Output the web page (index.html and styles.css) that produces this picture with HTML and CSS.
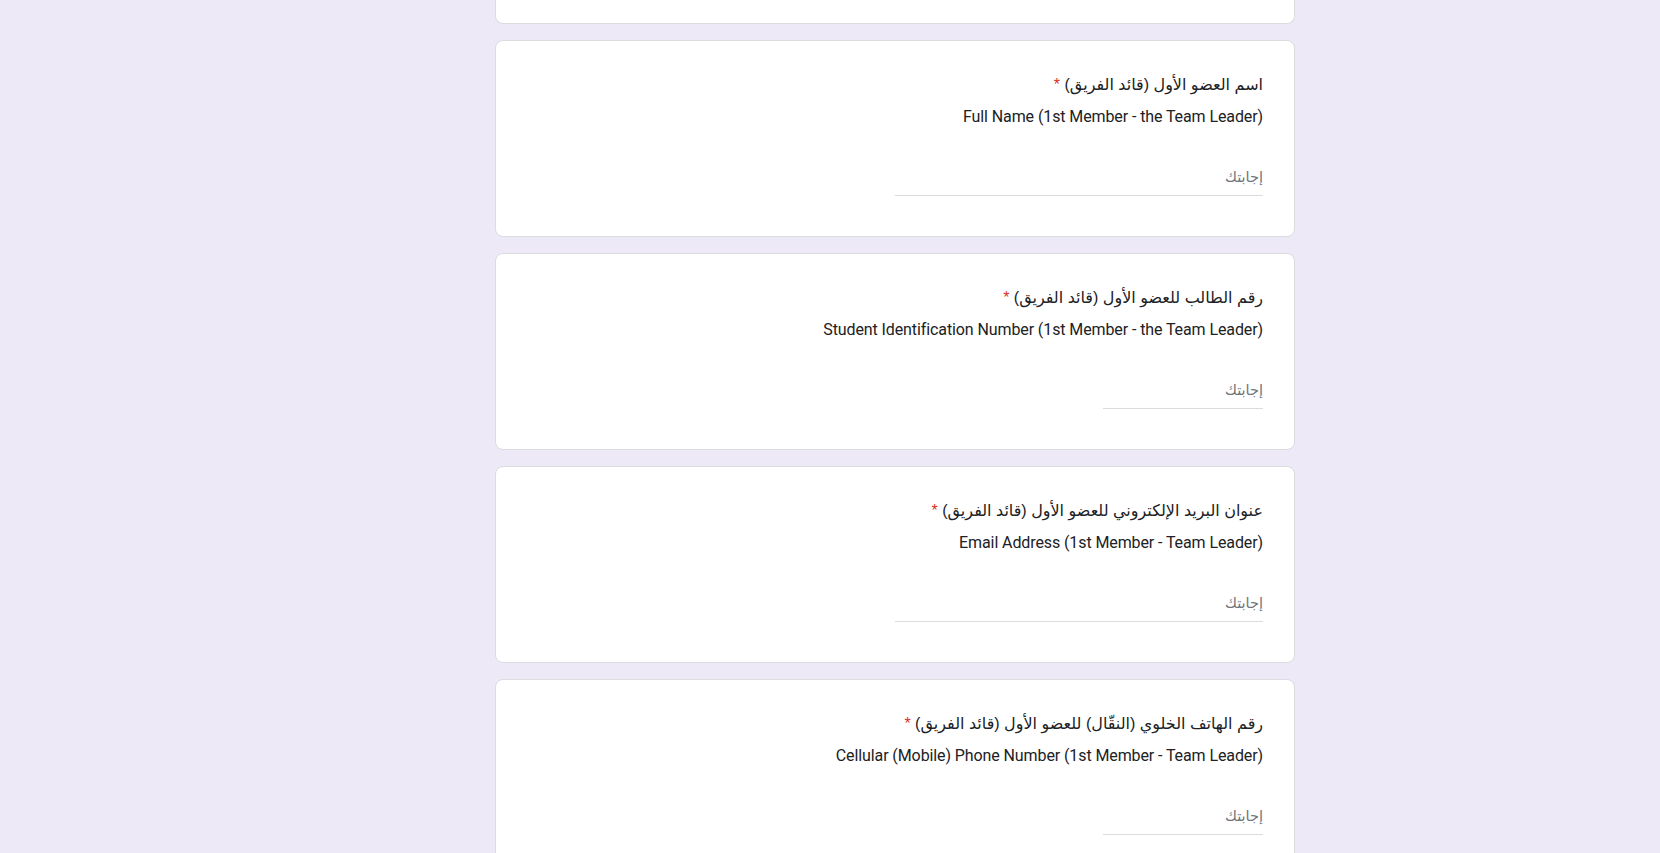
FILE: index.html
```html
<!DOCTYPE html>
<html lang="ar" dir="rtl">
<head>
<meta charset="utf-8">
<title>Form</title>
<link rel="stylesheet" href="styles.css">
</head>
<body>
<main class="form">
  <div class="card card-cut"></div>

  <section class="card">
    <div class="q-title">اسم العضو الأول (قائد الفريق) <span class="req">*</span></div>
    <div class="q-desc">Full Name (1st Member - the Team Leader)</div>
    <div class="answer answer-wide"><span class="ph">إجابتك</span></div>
  </section>

  <section class="card">
    <div class="q-title">رقم الطالب للعضو الأول (قائد الفريق) <span class="req">*</span></div>
    <div class="q-desc">Student Identification Number (1st Member - the Team Leader)</div>
    <div class="answer answer-narrow"><span class="ph">إجابتك</span></div>
  </section>

  <section class="card">
    <div class="q-title">عنوان البريد الإلكتروني للعضو الأول (قائد الفريق) <span class="req">*</span></div>
    <div class="q-desc">Email Address (1st Member - Team Leader)</div>
    <div class="answer answer-wide"><span class="ph">إجابتك</span></div>
  </section>

  <section class="card">
    <div class="q-title">رقم الهاتف الخلوي (النقّال) للعضو الأول (قائد الفريق) <span class="req">*</span></div>
    <div class="q-desc">Cellular (Mobile) Phone Number (1st Member - Team Leader)</div>
    <div class="answer answer-narrow"><span class="ph">إجابتك</span></div>
  </section>
</main>
</body>
</html>
```

FILE: styles.css
```css
html, body {
  margin: 0;
  padding: 0;
}
body {
  background: #ede9f7;
  font-family: Roboto, "Liberation Sans", "DejaVu Sans", sans-serif;
  color: #202124;
  overflow: hidden;
  height: 853px;
}
.form {
  direction: rtl;
  width: 800px;
  margin-right: 365px;
  margin-left: 0;
  display: flex;
  flex-direction: column;
  gap: 16px;
}
.card {
  box-sizing: border-box;
  background: #fff;
  border: 1px solid #dadce0;
  border-radius: 8px;
  padding: 32px 31px 0 31px;
  height: 197px;
  display: flex;
  flex-direction: column;
  align-items: flex-start;
}
.card-cut {
  height: 24px;
  border-top: none;
  border-top-left-radius: 0;
  border-top-right-radius: 0;
  padding: 0;
}
.q-title {
  font-size: 16px;
  line-height: 24px;
  font-family: "Liberation Sans", "DejaVu Sans", sans-serif;
  color: #202124;
}
.req {
  color: #d93025;
}
.q-desc {
  margin-top: 8px;
  font-size: 16px;
  line-height: 24px;
  direction: ltr;
  letter-spacing: -0.1px;
}
.answer {
  margin-top: 30px;
  height: 37px;
  box-sizing: border-box;
  border-bottom: 1px solid #dadce0;
  display: flex;
  align-items: center;
}
.answer-wide { width: 50%; }
.answer-narrow { width: 160px; }
.ph {
  font-family: "Liberation Sans", "DejaVu Sans", sans-serif;
  font-size: 14.5px;
  color: #70757a;
}
```
